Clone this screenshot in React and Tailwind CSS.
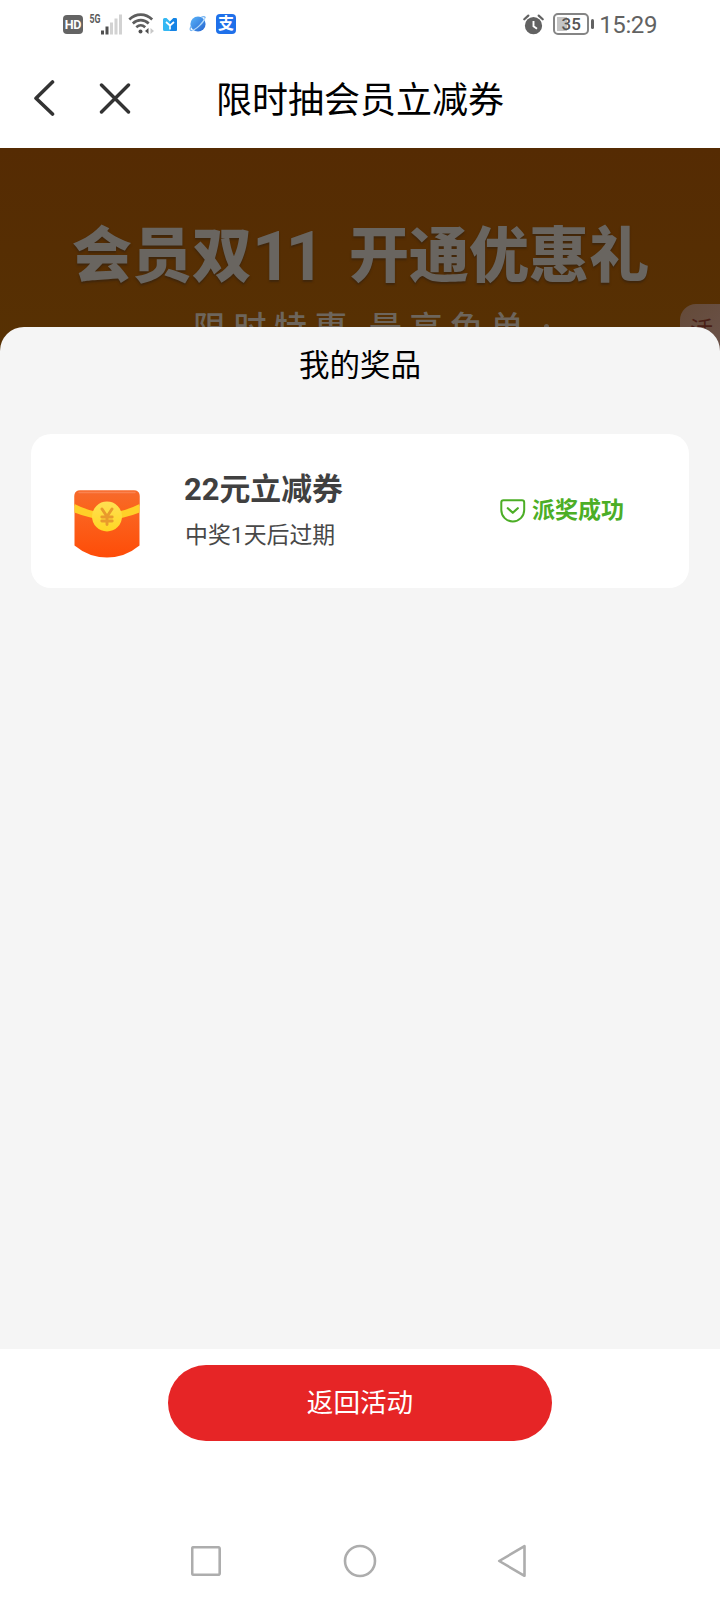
import React from "react";

const StatusBar = () => (
  <div className="h-12 pl-[63px] pr-[63px] flex items-center justify-between text-[#626262]">
    <div className="flex items-center">
      <div className="w-[20px] h-[19px] rounded-[4px] bg-[#646464] text-white text-[12.500px] leading-[20px] font-bold text-center tracking-tight">
        HD
      </div>
      <svg className="ml-[6px]" width="34" height="24" viewBox="0 0 34 24">
        <text
          x="0.5"
          y="10.5"
          fontSize="12.5"
          fontWeight="700"
          fill="#5c5c5c"
          textLength="11"
          lengthAdjust="spacingAndGlyphs"
        >
          5G
        </text>
        <rect x="12" y="18.5" width="3" height="4" fill="#505050" />
        <rect x="16.5" y="14.5" width="3" height="8" fill="#505050" />
        <rect x="21" y="10.5" width="3" height="12" fill="#d2d2d2" />
        <rect x="25.5" y="6.5" width="3" height="16" fill="#d2d2d2" />
        <rect x="30" y="2.5" width="3" height="20" fill="#d2d2d2" />
      </svg>
      <svg className="ml-[5px]" width="27" height="22" viewBox="0 0 27 22">
        <g fill="none" stroke="#5e5e5e" strokeWidth="2.6">
          <path d="M1.300 6.500C8 0 17.500 0 24.200 6.500" />
          <path d="M4.800 10.500C9.500 6 16 6 20.700 10.500" />
          <path d="M8.300 14.300C11 11.800 14.500 11.800 17.200 14.300" />
        </g>
        <circle cx="12.500" cy="18.500" r="2" fill="#505050" />
        <path d="M20.500 15v6l-3.500-3z" fill="#505050" />
        <path d="M22.500 15v6l3.500-3z" fill="#c8c8c8" />
      </svg>
      <svg className="ml-[8px]" width="14" height="13" viewBox="0 0 14 13">
        <path d="M0 1.500Q0 0 1.500 0H3.500L7 3.500 10.500 0h2Q14 0 14 1.500v10q0 1.500-1.500 1.500h-11Q0 13 0 11.500z" fill="#35b8f3" />
        <path d="M14 1.500Q14 0 12.500 0h-2L7 3.500V13h5.500q1.500 0 1.500-1.500z" fill="#1683e5" />
        <path
          d="M3 4l4 3.500L11 4M7 7.500v4"
          fill="none"
          stroke="#fff"
          strokeWidth="1.700"
        />
      </svg>
      <svg className="ml-[12px]" width="18" height="18" viewBox="0 0 18 18">
        <defs>
          <linearGradient id="planet" x1="0" y1="0" x2="1" y2="1">
            <stop offset="0" stopColor="#5bb5fa" />
            <stop offset="1" stopColor="#2463cf" />
          </linearGradient>
        </defs>
        <circle cx="9" cy="9" r="7.600" fill="url(#planet)" />
        <path
          d="M2.500 15.500C6 15.500 15 7.500 16 2.500"
          fill="none"
          stroke="#b4dafa"
          strokeWidth="1.300"
          strokeLinecap="round"
        />
        <path
          d="M2.500 15.500C0.500 15.500 1 13 2 11.500M16 2.500C16 1 13.500 1.500 12.500 2.300"
          fill="none"
          stroke="#79b6f2"
          strokeWidth="1.200"
          strokeLinecap="round"
        />
      </svg>
      <div className="ml-[9px] w-[20px] h-[20px] rounded-[4px] bg-[#1f70ea] text-white text-[16px] leading-[19px] font-bold text-center">
        支
      </div>
    </div>
    <div className="flex items-center">
      <svg width="21" height="21" viewBox="0 0 21 21">
        <circle cx="10.500" cy="11.700" r="8.600" fill="#626262" />
        <path
          d="M1.300 5.300L5.300 1.600M15.700 1.600l4 3.700"
          stroke="#626262"
          strokeWidth="2.200"
          strokeLinecap="round"
        />
        <path
          d="M10.500 7v5.300l3.500 2.500"
          fill="none"
          stroke="#fff"
          strokeWidth="1.900"
        />
      </svg>
      <div className="ml-[9px] w-[36px] h-[22px] rounded-[5px] border-2 border-[#858585] p-[2px]">
        <div className="h-full bg-linear-to-r from-[#c4c4c4] from-35% to-white to-35% text-[17px] leading-[15px] text-center font-medium text-[#555]">
          35
        </div>
      </div>
      <div className="ml-[2px] w-[3px] h-[10px] rounded-sm bg-[#626262]" />
      <div className="ml-[5px] pt-[2px] text-[24px] leading-6 tracking-[-0.400px] whitespace-nowrap">15:29</div>
    </div>
  </div>
);

const NavHeader = () => (
  <div className="h-[100px] pt-[2px] grid grid-cols-[216px_288px_1fr] items-center">
    <div className="flex items-center pl-[33px]">
      <svg width="22" height="38" viewBox="0 0 22 38">
        <path
          d="M19.500 2L3 18.200 19.500 34"
          fill="none"
          stroke="#333"
          strokeWidth="3.600"
          strokeLinecap="round"
          strokeLinejoin="round"
        />
      </svg>
      <svg className="ml-[44px]" width="32" height="32" viewBox="0 0 32 32">
        <path
          d="M2.500 2l27 27M29.500 2l-27 27"
          stroke="#333"
          strokeWidth="3.400"
          strokeLinecap="round"
        />
      </svg>
    </div>
    <h1 className="pt-[4px] text-[36px] leading-[52px] text-black whitespace-nowrap">
      限时抽会员立减券
    </h1>
  </div>
);

const Banner = () => (
  <div className="relative h-[204px] overflow-hidden bg-linear-to-b from-[#552b03] to-[#573103] text-[#696560]">
    <div className="pt-[67px] pl-[72px] flex items-center whitespace-nowrap text-[60px] leading-[84px] font-black [text-shadow:0_2px_2px_#40260b]">
      <span>会员双</span>
      <span className="w-[97px] text-[69px] tracking-[-6px] font-bold">11</span>
      <span>开通优惠礼</span>
    </div>
    <div className="pl-[193px] mt-[6px] flex whitespace-nowrap text-[33px] leading-[48px] tracking-[7.500px] font-medium text-[#6d655c]">
      <span className="w-[176px]">限时特惠</span>
      <span>最高免单</span>
      <span className="mt-[19px] ml-[13px] w-[5px] h-[5px] rounded-full bg-[#675b4e]" />
    </div>
    <div className="absolute left-[680px] top-[156px] w-[60px] h-[60px] rounded-l-[16px] bg-linear-to-br from-[#644a38] to-[#6d5550] pl-[10px] pt-[11px] text-[23px] leading-[32px] text-[#4a1f16]">
      活
    </div>
  </div>
);

const EnvelopeIcon = () => (
  <svg width="66" height="68" viewBox="0 0 66 68">
    <defs>
      <linearGradient id="envelope" x1="0" y1="0" x2="0" y2="1">
        <stop offset="0" stopColor="#f9702b" />
        <stop offset="1" stopColor="#fe4c08" />
      </linearGradient>
      <linearGradient id="flap" x1="0" y1="0" x2="0" y2="1">
        <stop offset="0" stopColor="#f76a2c" />
        <stop offset="1" stopColor="#fb6218" />
      </linearGradient>
      <linearGradient id="coin" x1="0" y1="0" x2="0" y2="1">
        <stop offset="0" stopColor="#ffe052" />
        <stop offset="1" stopColor="#ffd624" />
      </linearGradient>
    </defs>
    <path d="M0.500 6Q0.500 0.500 6 0.500H60Q65.500 0.500 65.500 6V55.500Q51 67.500 33 67.500T0.500 55.500Z" fill="url(#envelope)" />
    <path d="M0.500 6Q0.500 0.500 6 0.500H60Q65.500 0.500 65.500 6V15.500Q33 33 0.500 15.500Z" fill="url(#flap)" />
    <path d="M5 2.500H61" stroke="#f98350" strokeWidth="1.500" strokeLinecap="round" />
    <path d="M0.500 14Q33 31 65.500 14V22.500Q33 36 0.500 22.500Z" fill="#ffd028" />
    <circle cx="33" cy="26.500" r="15" fill="url(#coin)" />
    <path
      d="M28 19l5 7.500 5-7.500M33 26.500v8M27.800 27h10.400M27.800 31h10.400"
      fill="none"
      stroke="#e99a2c"
      strokeWidth="2.900"
      strokeLinecap="round"
    />
  </svg>
);

const PrizeCard = ({ name, expiry, status }) => (
  <div className="mx-[31px] h-[154px] rounded-[20px] bg-white flex items-center">
    <div className="ml-[43px] mt-[25px]">
      <EnvelopeIcon />
    </div>
    <div className="ml-[44px] w-[316px] whitespace-nowrap">
      <h3 className="text-[30.900px] leading-[44px] font-bold text-[#404040]">{name}</h3>
      <p className="mt-[6px] pl-[1px] text-[22.900px] leading-[36px] text-[#484848]">{expiry}</p>
    </div>
    <div className="-mt-[1px] flex items-center text-[#4cae26] whitespace-nowrap">
      <svg width="26" height="24" viewBox="0 0 26 24">
        <path
          d="M3.500 1.300h18.500q2.200 0 2.200 2.200v7.500a11.400 11.400 0 0 1-22.900 0v-7.500q0-2.200 2.200-2.200z"
          fill="none"
          stroke="currentColor"
          strokeWidth="2"
        />
        <path
          d="M7.800 9.200l5 4.600 5-4.600"
          fill="none"
          stroke="currentColor"
          strokeWidth="2.200"
          strokeLinecap="round"
          strokeLinejoin="round"
        />
      </svg>
      <span className="ml-[6px] text-[23px] leading-[34px] font-bold">{status}</span>
    </div>
  </div>
);

const SystemNav = () => (
  <div className="h-[78px] grid grid-cols-[206px_308px_206px] items-center">
    <svg className="justify-self-end -mr-[15px]" width="30" height="30" viewBox="0 0 30 30">
      <rect x="1.200" y="1.200" width="27.500" height="27.500" rx="1.500" fill="none" stroke="#adadad" strokeWidth="2.600" />
    </svg>
    <svg className="justify-self-center" width="34" height="34" viewBox="0 0 34 34">
      <circle cx="17" cy="17" r="15" fill="none" stroke="#adadad" strokeWidth="2.600" />
    </svg>
    <svg className="-ml-[17px]" width="30" height="34" viewBox="0 0 30 34">
      <path
        d="M27.500 2.200V31.800L2.200 17Z"
        fill="none"
        stroke="#adadad"
        strokeWidth="2.600"
        strokeLinejoin="round"
      />
    </svg>
  </div>
);

const App = () => {
  return (
    <div className="w-[720px] h-[1600px] overflow-hidden bg-white flex flex-col font-['Roboto','Noto_Sans_CJK_SC',sans-serif]">
      <StatusBar />
      <NavHeader />
      <Banner />
      <div className="relative -mt-[25px] h-[1022px] rounded-t-[24px] bg-[#f5f5f5]">
        <h2 className="pt-[17px] mb-[46px] text-center text-[30.500px] leading-[44px] text-black">
          我的奖品
        </h2>
        <PrizeCard name="22元立减券" expiry="中奖1天后过期" status="派奖成功" />
      </div>
      <div className="h-[173px] pt-[16px]">
        <button className="block mx-auto w-[384px] h-[76px] rounded-full bg-[#e62526] text-white text-[26.600px] leading-[76px]">
          返回活动
        </button>
      </div>
      <SystemNav />
    </div>
  );
};

export default App;
